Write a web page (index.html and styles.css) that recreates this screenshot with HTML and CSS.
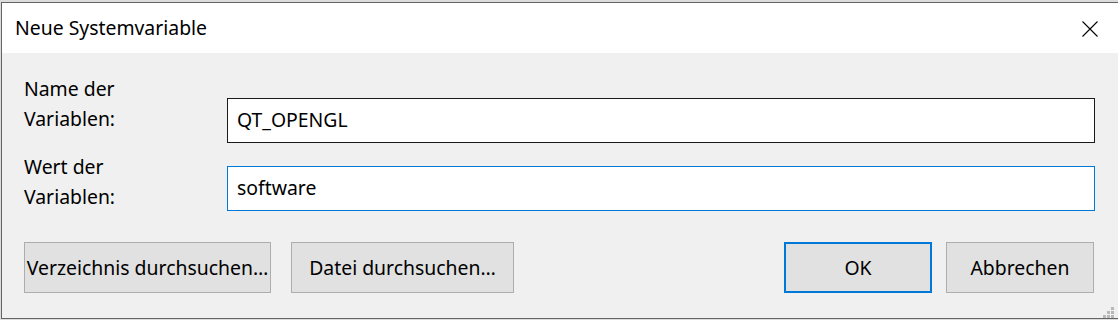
FILE: index.html
```html
<!DOCTYPE html>
<html lang="de">
<head>
    <meta charset="UTF-8">
    <title>Neue Systemvariable</title>
    <link rel="stylesheet" href="styles.css">
</head>
<body>
    <div class="dialog">
        <div class="title-bar">
            <div class="title">Neue Systemvariable</div>
            <div class="close-btn">
                <svg width="16" height="16" viewBox="0 0 16 16">
                    <path d="M0.5 0.5 L15.5 15.5 M15.5 0.5 L0.5 15.5" stroke="#000" stroke-width="1.1" fill="none"/>
                </svg>
            </div>
        </div>

        <div class="dialog-body">
            <div class="field-row first">
                <label class="field-label">Name der<br>Variablen:</label>
                <div class="text-input">QT_OPENGL</div>
            </div>

            <div class="field-row second">
                <label class="field-label">Wert der<br>Variablen:</label>
                <div class="text-input focused">software</div>
            </div>

            <div class="button-row">
                <button class="btn btn-browse-dir">Verzeichnis durchsuchen…</button>
                <button class="btn btn-browse-file">Datei durchsuchen…</button>
                <div class="spacer"></div>
                <button class="btn btn-ok">OK</button>
                <button class="btn btn-cancel">Abbrechen</button>
            </div>

            <svg class="size-grip" width="11" height="11" viewBox="0 0 11 11">
                <rect x="8" y="0" width="3" height="3" fill="#b8b8b8"/>
                <rect x="4" y="4" width="3" height="3" fill="#b8b8b8"/>
                <rect x="8" y="4" width="3" height="3" fill="#b8b8b8"/>
                <rect x="0" y="8" width="3" height="3" fill="#b8b8b8"/>
                <rect x="4" y="8" width="3" height="3" fill="#b8b8b8"/>
                <rect x="8" y="8" width="3" height="3" fill="#b8b8b8"/>
            </svg>
        </div>
    </div>
</body>
</html>
```

FILE: styles.css
```css
body {
    margin: 0;
    padding: 2px 0 0 1px;
    background-color: #dcdcdc;
    font-family: "Noto Sans", "Open Sans", sans-serif;
    font-size: 19.4px;
    color: #000;
    overflow: hidden;
}

.dialog {
    width: 1117px;
    border-top: 1px solid #646464;
    border-left: 1px solid #646464;
    border-bottom: 1px solid #646464;
    background: #f0f0f0;
}

.title-bar {
    height: 50px;
    background: #fff;
    display: flex;
    align-items: center;
    justify-content: space-between;
}

.title {
    padding-left: 13px;
    padding-bottom: 1px;
}

.close-btn {
    width: 16px;
    height: 16px;
    margin-right: 21px;
    margin-top: 2px;
}

.close-btn svg {
    display: block;
}

.dialog-body {
    position: relative;
    height: 265px;
    padding: 0 24px 0 22px;
    box-sizing: border-box;
}

.field-row {
    display: flex;
    align-items: flex-start;
}

.field-row.first {
    padding-top: 21px;
}

.field-row.second {
    margin-top: 9px;
}

.field-label {
    width: 203px;
    flex-shrink: 0;
    line-height: 30px;
}

.text-input {
    flex: 1;
    height: 43px;
    border: 1px solid #1a1a1a;
    background: #fff;
    padding-left: 9px;
    line-height: 41px;
    box-sizing: content-box;
}

.field-row.first .text-input {
    margin-top: 24px;
}

.field-row.second .text-input {
    margin-top: 14px;
}

.text-input.focused {
    border-color: #0078d7;
}

.button-row {
    display: flex;
    margin-top: 30px;
}

.spacer {
    flex: 1;
}

.btn {
    height: 51px;
    background: #e1e1e1;
    border: 1px solid #adadad;
    font-family: inherit;
    font-size: 19.4px;
    color: #000;
    padding: 0;
    white-space: nowrap;
    box-sizing: border-box;
}

.btn-browse-dir {
    width: 247px;
}

.btn-browse-file {
    width: 223px;
    margin-left: 20px;
}

.btn-ok {
    width: 148px;
    border: 2px solid #0078d7;
}

.btn-cancel {
    width: 148px;
    margin-left: 14px;
    margin-right: 1px;
}

.size-grip {
    position: absolute;
    right: 5px;
    bottom: 0;
}
```
